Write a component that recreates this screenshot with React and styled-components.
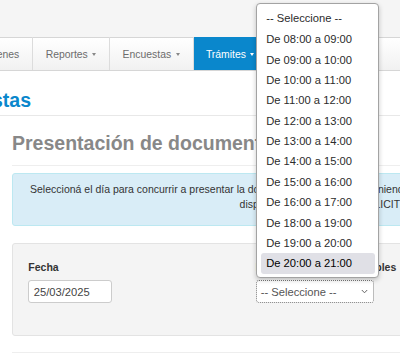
import React from 'react';
import styled, { createGlobalStyle } from 'styled-components';

const Global = createGlobalStyle`
  html, body { margin: 0; padding: 0; width: 400px; height: 353px; overflow: hidden; background: #fff; }
  body { font-family: "Liberation Sans", Arial, sans-serif; color: #333; }
  * { box-sizing: border-box; }
`;

const Page = styled.div`
  position: relative;
  width: 400px;
  height: 353px;
  overflow: hidden;
`;

const TopStrip = styled.div`
  height: 37px;
  background: #f5f5f5;
`;

const Navbar = styled.nav`
  height: 34px;
  border-top: 1px solid #d6d6d6;
  border-bottom: 1px solid #d6d6d6;
  background: linear-gradient(#ffffff, #f1f1f1);
  display: flex;
`;

const NavList = styled.ul`
  display: flex;
  list-style: none;
  margin: -1px 0 0 -34px;
  padding: 0;
  height: 33px;
`;

const NavItem = styled.li`
  display: flex;
  align-items: center;
  gap: 4.4px;
  height: 100%;
  padding: 1px 13px 0 12.4px;
  font-size: 10.4px;
  white-space: nowrap;
  color: ${p => (p.$active ? '#fff' : '#6c6c6c')};
  background: ${p => (p.$active ? '#0a87cc' : 'transparent')};
  border-left: 1px solid ${p => (p.$first ? 'transparent' : '#dcdcdc')};
`;

const Caret = styled.span`
  width: 0;
  height: 0;
  border-top: 3px solid currentColor;
  border-left: 2.5px solid transparent;
  border-right: 2.5px solid transparent;
  opacity: ${p => (p.$active ? 1 : 0.8)};
`;

const SectionTitle = styled.h1`
  margin: 17px 0 0 -66.5px;
  padding: 0 0 3px;
  border-bottom: 1px solid #e8e8e8;
  font: bold 19.5px/24px "Liberation Sans", Arial, sans-serif;
  color: #0a87cc;
`;

const Content = styled.div`
  padding-left: 12px;
  width: 680px;
`;

const PageHeader = styled.h2`
  margin: 14.5px 0 0;
  padding-bottom: 10.5px;
  border-bottom: 1px solid #eee;
  font: bold 19.5px/24px "Liberation Sans", Arial, sans-serif;
  color: #888;
`;

const Alert = styled.div`
  margin-top: 7px;
  padding: 8px 0 13px;
  background: #d9edf7;
  border: 1px solid #bce8f1;
  border-radius: 3px;
  font-size: 10.5px;
  line-height: 15px;
  text-align: center;
  white-space: nowrap;
  color: #333;
  width: 633.8px;
`;

const Well = styled.div`
  margin-top: 17px;
  padding: 16px 15.3px 31.7px;
  background: #f4f4f4;
  border: 1px solid #e3e3e3;
  border-radius: 3px;
  display: grid;
  grid-template-columns: 227.4px 227.4px 1fr;
  width: 654px;
`;

const Field = styled.div`
  display: flex;
  flex-direction: column;
  align-items: flex-start;
`;

const Label = styled.label`
  font-weight: bold;
  font-size: 10.5px;
  line-height: 15px;
  margin-bottom: 5px;
  white-space: nowrap;
  color: #333;
`;

const TextInput = styled.div`
  width: 83.4px;
  height: 23.3px;
  display: flex;
  align-items: center;
  padding-left: 4.4px;
  background: #fff;
  border: 1px solid #ccc;
  border-radius: 3px;
  font-size: 11.2px;
  color: #444;
`;

const SelectWrap = styled.div`
  position: relative;
`;

const SelectBox = styled.div`
  width: 118.6px;
  height: 23.3px;
  display: flex;
  align-items: center;
  justify-content: space-between;
  padding: 0 5px 0 4px;
  background: #fff;
  border: 1px dotted #7a7a7a;
  border-radius: 3px;
  font-size: 11.2px;
  color: #555;
`;

const Dropdown = styled.ul`
  position: absolute;
  left: 0;
  bottom: calc(100% + 2.2px);
  width: 123.6px;
  margin: 0;
  padding: 3px 3.3px 3px 4px;
  list-style: none;
  background: #fff;
  border: 1px solid #a3a3a3;
  border-radius: 4px;
  box-shadow: 0 2px 5px rgba(0, 0, 0, 0.22);
  z-index: 10;
`;

const Option = styled.li`
  height: ${p => (p.$tall ? '22px' : '20.4px')};
  line-height: ${p => (p.$tall ? '22px' : '20.4px')};
  padding-left: 5.5px;
  font-size: 11.2px;
  white-space: nowrap;
  border-radius: 3px;
  color: ${p => (p.$selected ? '#000' : '#2b2b2b')};
  background: ${p => (p.$selected ? '#e0e0e6' : 'transparent')};
`;

const Divider = styled.hr`
  margin: 16px 0 0;
  border: 0;
  border-top: 1px solid #eee;
  width: 654px;
`;

const Chevron = () => (
  <svg width="7" height="5" viewBox="0 0 7 5" fill="none">
    <path d="M0.8 1 L3.5 3.8 L6.2 1" stroke="#666" strokeWidth="1" />
  </svg>
);

const navItems = [
  { label: 'Órdenes', caret: false },
  { label: 'Reportes', caret: true },
  { label: 'Encuestas', caret: true },
  { label: 'Trámites', caret: true, active: true },
];

const hours = [
  'De 08:00 a 09:00',
  'De 09:00 a 10:00',
  'De 10:00 a 11:00',
  'De 11:00 a 12:00',
  'De 12:00 a 13:00',
  'De 13:00 a 14:00',
  'De 14:00 a 15:00',
  'De 15:00 a 16:00',
  'De 16:00 a 17:00',
  'De 18:00 a 19:00',
  'De 19:00 a 20:00',
  'De 20:00 a 21:00',
];

export default function App() {
  return (
    <Page>
      <Global />
      <TopStrip />
      <Navbar>
        <NavList>
          {navItems.map((it, i) => (
            <NavItem key={it.label} $first={i === 0} $active={it.active}>
              {it.label}
              {it.caret && <Caret $active={it.active} />}
            </NavItem>
          ))}
        </NavList>
      </Navbar>
      <SectionTitle>Encuestas</SectionTitle>
      <Content>
        <PageHeader>Presentación de documentación</PageHeader>
        <Alert>
          Seleccioná el día para concurrir a presentar la documentación requerida teniendo en cuenta que sólo se indican los días y horas
          <br />
          disponibles para hacer la SOLICITUD.
        </Alert>
        <Well>
          <Field>
            <Label>Fecha</Label>
            <TextInput>25/03/2025</TextInput>
          </Field>
          <Field>
            <Label>Horarios del día disponibles</Label>
            <SelectWrap>
              <SelectBox>
                <span>-- Seleccione --</span>
                <Chevron />
              </SelectBox>
              <Dropdown>
                <Option $tall>-- Seleccione --</Option>
                {hours.map((h, i) => (
                  <Option key={h} $selected={i === hours.length - 1}>{h}</Option>
                ))}
              </Dropdown>
            </SelectWrap>
          </Field>
        </Well>
        <Divider />
      </Content>
    </Page>
  );
}
